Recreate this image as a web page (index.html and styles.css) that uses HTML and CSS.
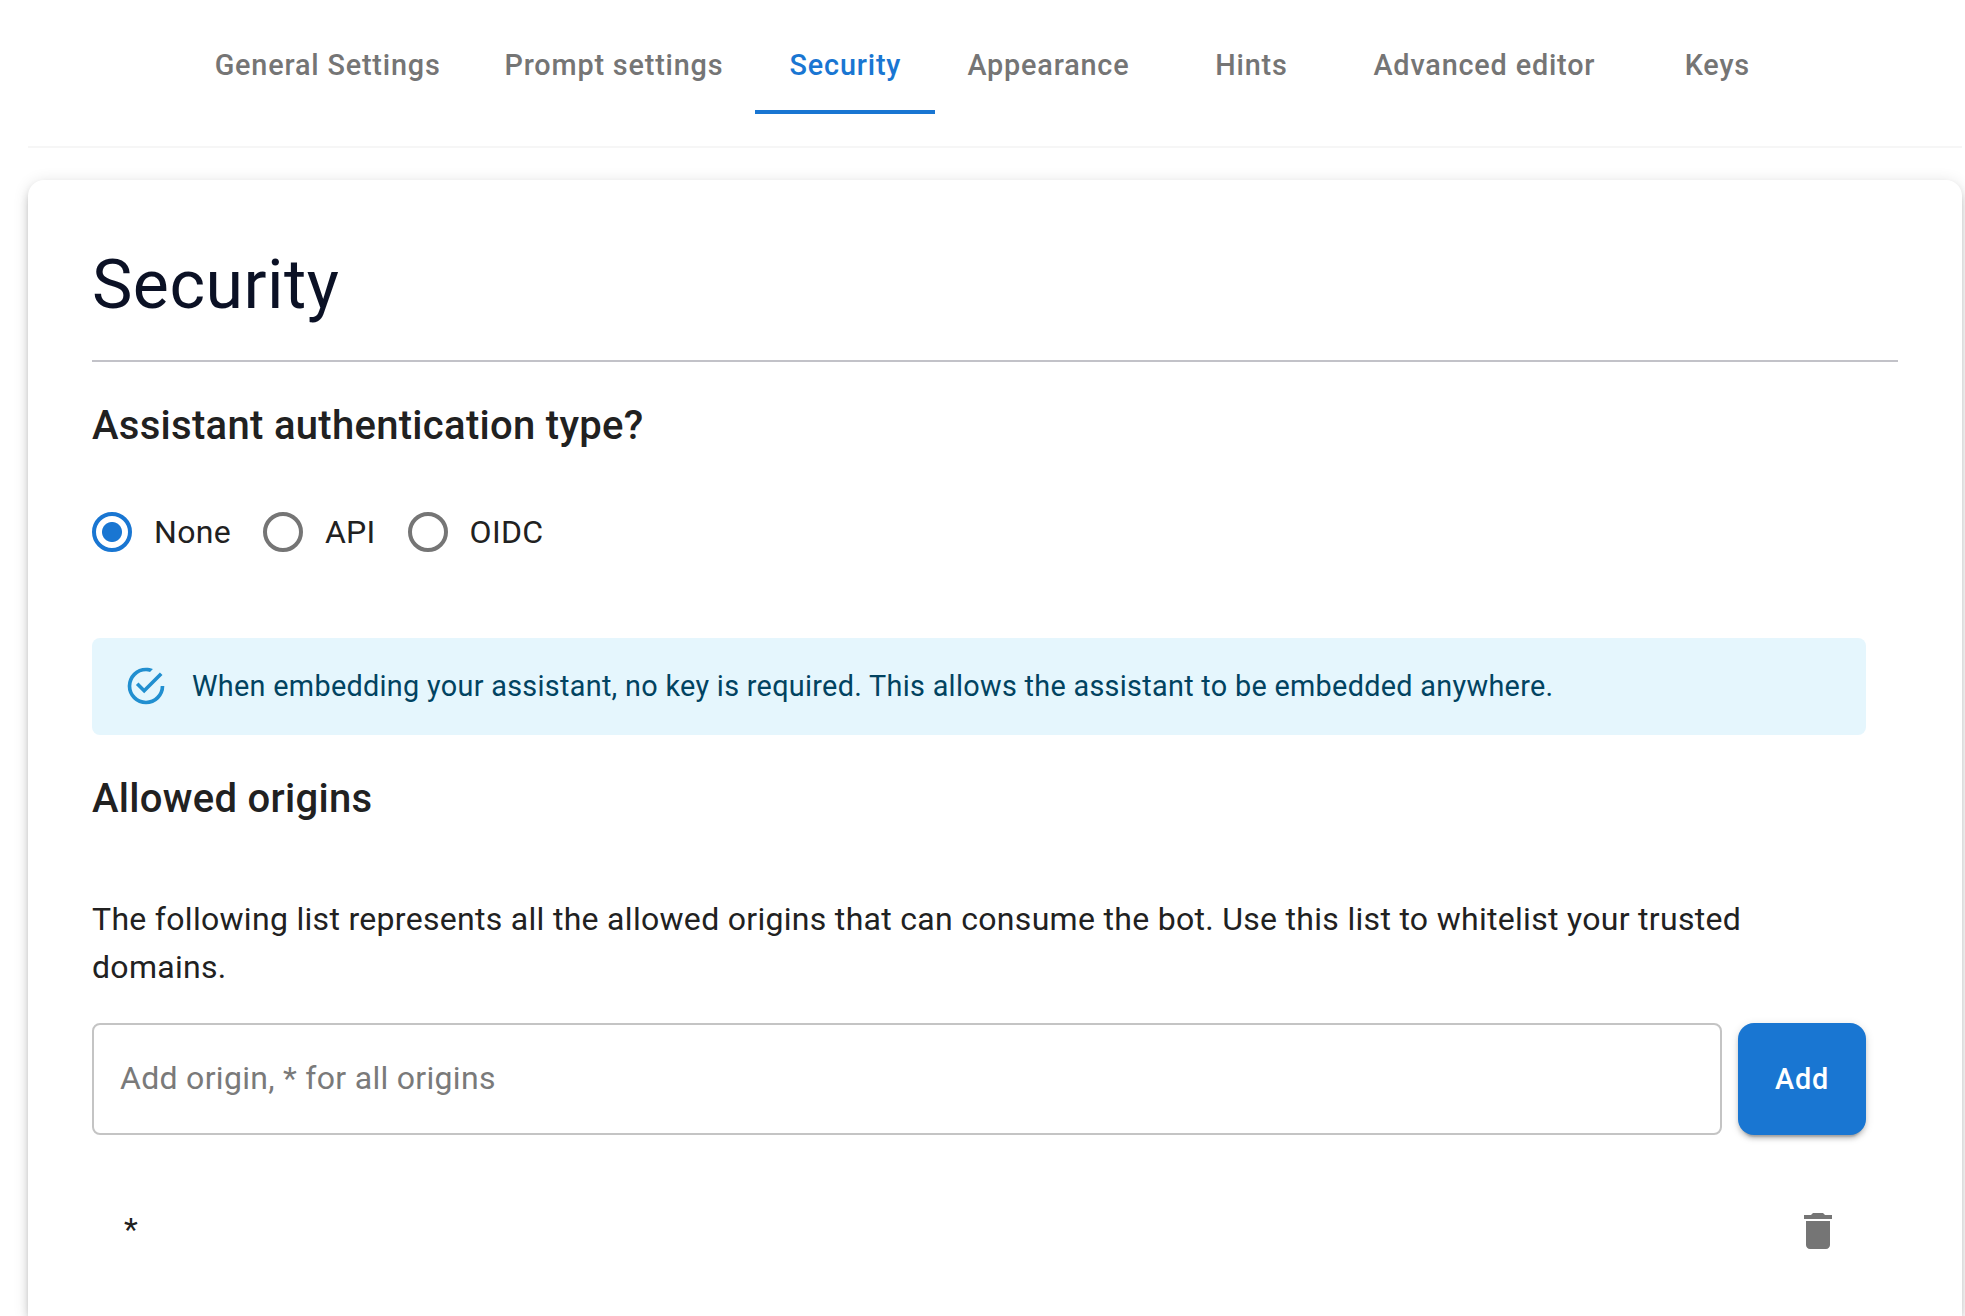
FILE: index.html
```html
<!DOCTYPE html>
<html lang="en">

<head>
  <meta charset="UTF-8">
  <title>Assistant settings - Security</title>
  <meta name="viewport" content="width=device-width, initial-scale=1.0">
  <link rel="stylesheet" href="styles.css">
</head>

<body>
  <div class="page">
    <nav class="tabs">
      <a class="tab">General Settings</a>
      <a class="tab">Prompt settings</a>
      <a class="tab active">Security</a>
      <a class="tab">Appearance</a>
      <a class="tab">Hints</a>
      <a class="tab">Advanced editor</a>
      <a class="tab">Keys</a>
    </nav>

    <main class="card">
      <h1>Security</h1>

      <div class="content">
        <h2>Assistant authentication type?</h2>
        <div class="radio-group">
          <label><input type="radio" name="auth" checked /> None</label>
          <label><input type="radio" name="auth" /> API</label>
          <label><input type="radio" name="auth" /> OIDC</label>
        </div>

        <div class="alert">
          <svg class="alert-icon" viewBox="0 0 24 24">
            <path d="M20,12A8,8 0 0,1 12,20A8,8 0 0,1 4,12A8,8 0 0,1 12,4C12.76,4 13.5,4.11 14.2,4.31L15.77,2.74C14.61,2.26 13.34,2 12,2A10,10 0 0,0 2,12A10,10 0 0,0 12,22A10,10 0 0,0 22,12M7.91,10.08L6.5,11.5L11,16L21,6L19.59,4.58L11,13.17L7.91,10.08Z" />
          </svg>
          <span>When embedding your assistant, no key is required. This allows the assistant to be embedded anywhere.</span>
        </div>

        <h2>Allowed origins</h2>
        <p>The following list represents all the allowed origins that can consume the bot. Use this list to whitelist your trusted domains.</p>

        <div class="input-group">
          <input type="text" placeholder="Add origin, * for all origins" />
          <button class="add-btn">Add</button>
        </div>

        <div class="origin">
          <span>*</span>
          <button class="delete-btn" aria-label="Delete">
            <svg viewBox="0 0 24 24">
              <path d="M6 19c0 1.1 0.9 2 2 2h8c1.1 0 2-0.9 2-2V7H6v12zM19 4h-3.5l-1-1h-5l-1 1H5v2h14V4z" />
            </svg>
          </button>
        </div>
      </div>
    </main>
  </div>
</body>

</html>
```

FILE: styles.css
```css
* {
  box-sizing: border-box;
}

body {
  margin: 0;
  background: #fff;
  color: #212121;
  font-family: Roboto, sans-serif;
  font-size: 32px;
  line-height: 48px;
  letter-spacing: 0.00938em;
}

.page {
  display: flex;
  flex-direction: column;
  height: 100vh;
  padding: 18px 3px 0 28px;
  overflow: hidden;
}

.tabs {
  display: flex;
  justify-content: center;
  padding-bottom: 32px;
  border-bottom: 2px solid #f6f6f6;
}

.tab {
  display: flex;
  align-items: center;
  justify-content: center;
  min-width: 180px;
  height: 96px;
  padding: 2px 32px 0;
  border-bottom: 4px solid transparent;
  color: #757575;
  font-size: 28.8px;
  font-weight: 500;
  letter-spacing: 0.02857em;
  white-space: nowrap;
}

.tab.active {
  color: #1976d2;
  border-bottom-color: #1976d2;
}

.card {
  flex: 1;
  margin-top: 32px;
  padding: 64px 64px 0;
  background: #fff;
  border-radius: 16px 16px 0 0;
  box-shadow: 0 6px 6px -4px rgba(0, 0, 0, 0.2), 0 6px 8px rgba(0, 0, 0, 0.14), 0 2px 16px rgba(0, 0, 0, 0.12);
}

h1 {
  margin: 0 0 32px;
  padding-bottom: 34px;
  border-bottom: 2px solid #c2c2c8;
  color: #0b1125;
  font-size: 68px;
  font-weight: 400;
  line-height: 82px;
  letter-spacing: 0.00735em;
}

h2 {
  margin: 0;
  font-size: 40px;
  font-weight: 500;
  line-height: 64px;
  letter-spacing: 0.0075em;
}

.content {
  padding-right: 32px;
}

.radio-group {
  display: flex;
  gap: 32px;
  margin: 32px 0 64px;
}

.radio-group label {
  display: flex;
  align-items: center;
  gap: 22px;
  height: 84px;
}

input[type="radio"] {
  appearance: none;
  width: 40px;
  height: 40px;
  margin: 0;
  border: 4px solid #757575;
  border-radius: 50%;
}

input[type="radio"]:checked {
  border-color: #1976d2;
  background: radial-gradient(circle, #1976d2 9.5px, transparent 10.5px);
}

.alert {
  display: flex;
  align-items: center;
  gap: 24px;
  height: 97px;
  margin-bottom: 32px;
  padding: 0 32px 1px;
  background: #e5f6fd;
  border-radius: 8px;
  color: #014361;
  font-size: 28.8px;
  letter-spacing: 0.01071em;
}

.alert-icon {
  width: 44px;
  height: 44px;
  fill: #218fd0;
}

p {
  margin: 64px 0 32px;
}

.input-group {
  display: flex;
  gap: 16px;
  height: 112px;
}

input[type="text"] {
  flex: 1;
  padding: 0 26px 2px;
  border: 2px solid #c4c4c4;
  border-radius: 8px;
  background: none;
  font: inherit;
  letter-spacing: inherit;
}

input::placeholder {
  color: #7a7a7a;
}

button {
  border: none;
  font-family: inherit;
  cursor: pointer;
}

.add-btn {
  width: 128px;
  background: #1976d2;
  color: white;
  border-radius: 16px;
  font-size: 28.8px;
  font-weight: 500;
  letter-spacing: 0.02857em;
  box-shadow: 0 6px 2px -4px rgba(0, 0, 0, 0.2), 0 4px 4px rgba(0, 0, 0, 0.14), 0 2px 10px rgba(0, 0, 0, 0.12);
}

.origin {
  display: flex;
  align-items: center;
  justify-content: space-between;
  margin-top: 56px;
  padding: 0 8px 0 32px;
}

.origin span {
  padding-bottom: 4px;
}

.delete-btn {
  width: 80px;
  height: 80px;
  padding: 16px;
  background: none;
}

.delete-btn svg {
  display: block;
  fill: #757575;
}
```
